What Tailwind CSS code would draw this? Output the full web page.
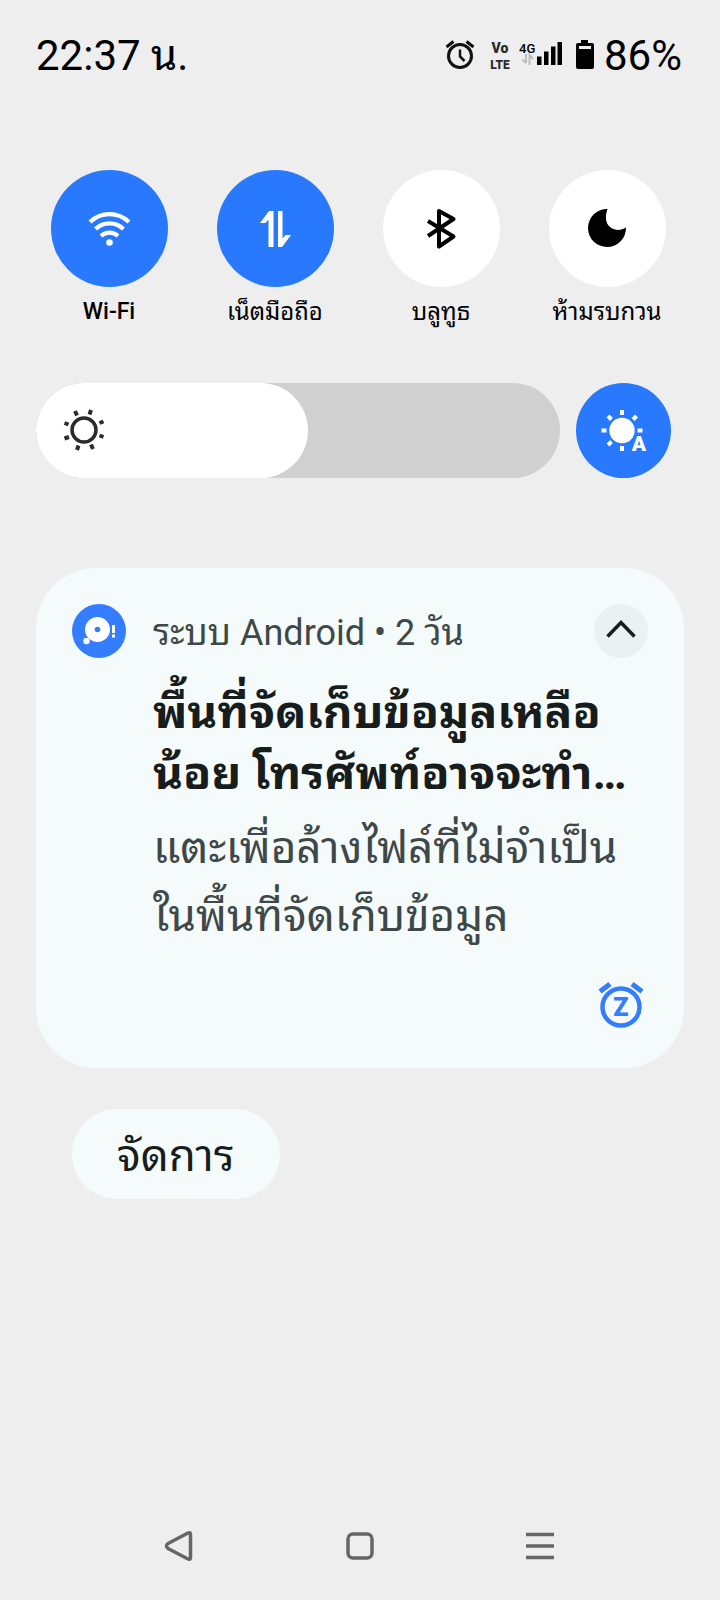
<!DOCTYPE html>
<html lang="th">
<head>
<meta charset="utf-8">
<meta name="viewport" content="width=device-width, initial-scale=1">
<title>แผงการแจ้งเตือน</title>
<script src="https://cdn.jsdelivr.net/npm/@tailwindcss/browser@4"></script>
</head>
<body class="flex min-h-screen flex-col bg-[#eeeeee] font-[Roboto,'Noto_Sans_Thai_Looped','Noto_Looped_Thai',Loma,Garuda,Waree,'Noto_Sans_Thai','Noto_Sans',sans-serif] text-black">

<header class="flex items-center justify-between pt-[31px] pr-[38px] pl-[36px]">
  <time class="text-[42px] leading-[50px]">22:37 น.</time>
  <div class="flex items-center">
    <svg class="h-[32px] w-[32px]" viewBox="0 0 32 32" fill="none" stroke="#111" role="img" aria-label="นาฬิกาปลุก">
      <circle cx="16" cy="16" r="11.500" stroke-width="3"/>
      <path d="M2.500 7 9.500 1.500M29.500 7 22.500 1.500" stroke-width="3"/>
      <path d="M16 9.500v7l4.500 4.500" stroke-width="2.500"/>
    </svg>
    <svg class="ml-[12px] h-[32px] w-[24px]" viewBox="0 0 24 32" fill="#2b2b2b" font-family="Roboto,sans-serif" font-weight="900" text-anchor="middle">
      <text x="12" y="13" font-size="14">Vo</text>
      <text x="12" y="29" font-size="12">LTE</text>
    </svg>
    <svg class="ml-[7px] h-[32px] w-[44px]" viewBox="0 0 44 32" role="img" aria-label="4G">
      <text x="0" y="13" font-family="Roboto,sans-serif" font-weight="500" font-size="13">4G</text>
      <path d="M7 14v9M3.500 19.500 7 23M10.500 25v-10l3.500 4" fill="none" stroke="#bdbdbd" stroke-width="2"/>
      <path d="M18 16.500h4.500V25H18zM25 11.500h4.500V25H25zM32 6.500h4.500V25H32zM38.500 2h4.500v23h-4.500z"/>
    </svg>
    <svg class="ml-[12px] h-[32px] w-[20px]" viewBox="0 0 20 32" role="img" aria-label="แบตเตอรี่">
      <path d="M6 0h7v3h4q2 0 2 2v22q0 2-2 2H3q-2 0-2-2V5q0-2 2-2h3z"/>
      <path d="M4 6h12v3H4z" fill="#eee"/>
    </svg>
    <span class="ml-[9px] text-[42px] leading-[50px]">86%</span>
  </div>
</header>

<main class="flex grow flex-col">
  <section class="mt-[89px] grid grid-cols-4 pr-[30px] pl-[26px]" aria-label="การตั้งค่าด่วน">
    <button class="flex flex-col items-center" aria-pressed="true">
      <span class="flex size-[117px] items-center justify-center rounded-full bg-[#2979ff]">
        <svg class="size-[48px]" viewBox="0 0 48 48" fill="none" stroke="#fff" stroke-width="4.200">
          <path d="M5 17a28 28 0 0 1 39 0M10.500 24a20 20 0 0 1 28 0M16 31a12.500 12.500 0 0 1 17 0"/>
          <circle cx="24.500" cy="37.500" r="3.300" fill="#fff" stroke="none"/>
        </svg>
      </span>
      <span class="mt-2 text-[23px] leading-[34px] font-medium">Wi-Fi</span>
    </button>
    <button class="flex flex-col items-center" aria-pressed="true">
      <span class="flex size-[117px] items-center justify-center rounded-full bg-[#2979ff]">
        <svg class="size-[48px]" viewBox="0 0 48 48" fill="#fff">
          <path d="M18 6H22.500v36h-5V14.500L14.500 18H9zM27 6H31.500v27.500l3-3.500h5.500L31 42h-4z"/>
        </svg>
      </span>
      <span class="mt-2 text-[24px] leading-[34px]">เน็ตมือถือ</span>
    </button>
    <button class="flex flex-col items-center" aria-pressed="false">
      <span class="flex size-[117px] items-center justify-center rounded-full bg-white">
        <svg class="size-[48px]" viewBox="0 0 48 48" fill="none" stroke="#000" stroke-width="4" stroke-linejoin="round">
          <path d="M11 16 36.500 31.500 22 41.500V6L36.500 14 11 31"/>
        </svg>
      </span>
      <span class="mt-2 text-[24px] leading-[34px]">บลูทูธ</span>
    </button>
    <button class="flex flex-col items-center" aria-pressed="false">
      <span class="flex size-[117px] items-center justify-center rounded-full bg-white">
        <svg class="size-[48px]" viewBox="0 0 48 48">
          <path d="M24.500 4A19 19 0 1 0 43 22.500C33 29 18 22 24.500 4z"/>
        </svg>
      </span>
      <span class="mt-2 text-[24px] leading-[34px]">ห้ามรบกวน</span>
    </button>
  </section>

  <section class="mt-[54px] flex gap-4 pr-[49px] pl-[36px]" aria-label="ความสว่าง">
    <label class="relative block h-[95px] grow overflow-hidden rounded-full bg-[#d0d0d0]">
      <span class="flex h-full w-[52%] items-center rounded-full bg-white pl-[24px]">
        <svg class="size-[48px]" viewBox="-24 -23 48 48" fill="none" stroke="#2b2b2b">
          <circle r="12" stroke-width="3.500"/>
          <path stroke-width="4" d="M5.500-15.500 7-20M15.500-7 19.500-8.500M15.500 5.500 19.500 7M7 14.500 9 19M-5.500 15.500-7 20M-15 7-19.500 8.500M-15.500-5.500-19.500-7M-7-14.500-9-19"/>
        </svg>
      </span>
      <input type="range" min="0" max="100" value="52" aria-label="ความสว่าง" class="absolute inset-0 h-full w-full opacity-0">
    </label>
    <button class="flex size-[95px] items-center justify-center rounded-full bg-[#2979ff]" aria-label="ความสว่างอัตโนมัติ" aria-pressed="true">
      <svg class="size-[48px]" viewBox="0 0 48 48">
        <circle cx="22" cy="23.500" r="12.700" fill="#fff"/>
        <path stroke="#fff" stroke-width="4" d="M22 3v5M22 39v5M1.500 23.500h5M37.500 23.500h5M8 9l3.500 3.500M36.500 9 33 12.500M8 38l3.500-3.500"/>
        <text x="39" y="44" text-anchor="middle" fill="#fff" stroke="#2979ff" stroke-width="2" paint-order="stroke" font-family="Roboto,sans-serif" font-weight="900" font-size="21">A</text>
      </svg>
    </button>
  </section>

  <article class="mx-[36px] mt-[90px] flex flex-col rounded-[60px] bg-[#f5fbfb] p-[36px]">
    <div class="flex items-center">
      <svg class="size-[54px] shrink-0" viewBox="0 0 54 54" fill="#fff">
        <circle cx="27" cy="27" r="27" fill="#347dff"/>
        <circle cx="25.500" cy="25.500" r="12.500"/>
        <circle cx="25.500" cy="25.500" r="2.800" fill="#347dff"/>
        <circle cx="14.500" cy="37" r="3.200"/>
        <path d="M40 21h3v8h-3zM40 30.500h3v3h-3z"/>
      </svg>
      <p class="ml-[27px] grow pt-1 text-[36px] leading-[50px] text-[#3f4848]">ระบบ Android • 2 วัน</p>
      <button class="flex size-[54px] items-center justify-center rounded-full bg-[#ebf1f1]" aria-label="ย่อ">
        <svg class="size-[32px]" viewBox="0 0 32 32" fill="none" stroke="#171d1d" stroke-width="3.500"><path d="M2.500 21.500 16 7.500l13.500 14"/></svg>
      </button>
    </div>
    <div class="mt-[24px] pl-[81px]">
      <h2 class="text-[46px] leading-[61px] font-bold whitespace-nowrap text-[#171d1d]">พื้นที่จัดเก็บข้อมูลเหลือ<br>น้อย โทรศัพท์อาจจะทำ…</h2>
      <p class="mt-[10px] text-[44px] leading-[68px] whitespace-nowrap text-[#3f4848]">แตะเพื่อล้างไฟล์ที่ไม่จำเป็น<br>ในพื้นที่จัดเก็บข้อมูล</p>
    </div>
    <button class="mt-[31px] mb-[3px] self-end pr-[3px]" aria-label="เลื่อน">
      <svg class="size-[48px]" viewBox="0 0 48 48" fill="none" stroke="#347dff">
        <circle cx="24" cy="26" r="18.500" stroke-width="4.500"/>
        <path d="M3 10.500 13 3M45 10.500 35 3" stroke-width="5"/>
        <text x="24" y="35" text-anchor="middle" fill="#347dff" stroke="none" font-family="Roboto,sans-serif" font-weight="900" font-size="25">Z</text>
      </svg>
    </button>
  </article>

  <button class="mt-[41px] ml-[72px] h-[90px] self-start rounded-full bg-[#f5fbfb] px-[45px] pt-1 text-[44px] leading-[86px] text-[#171d1d]">จัดการ</button>
</main>

<nav class="grid grid-cols-3 px-[90px] pb-[30px]" aria-label="ระบบ">
  <button class="flex justify-center" aria-label="ย้อนกลับ">
    <svg class="size-[48px]" viewBox="0 0 48 48" fill="none" stroke="#666" stroke-width="3.500" stroke-linejoin="round"><path d="M12 21.500 32 11q2.500-1 2.500 1.500v23q0 2.500-2.500 1.500L12 26.500q-3-2.500 0-5z"/></svg>
  </button>
  <button class="flex justify-center" aria-label="หน้าหลัก">
    <svg class="size-[48px]" viewBox="0 0 48 48" fill="none" stroke="#666" stroke-width="3.500"><rect x="12" y="12" width="24" height="24" rx="5"/></svg>
  </button>
  <button class="flex justify-center" aria-label="ล่าสุด">
    <svg class="size-[48px]" viewBox="0 0 48 48" fill="none" stroke="#666" stroke-width="3.500"><path d="M10 12.500h28M10 24h28M10 35.500h28"/></svg>
  </button>
</nav>
</body>
</html>
